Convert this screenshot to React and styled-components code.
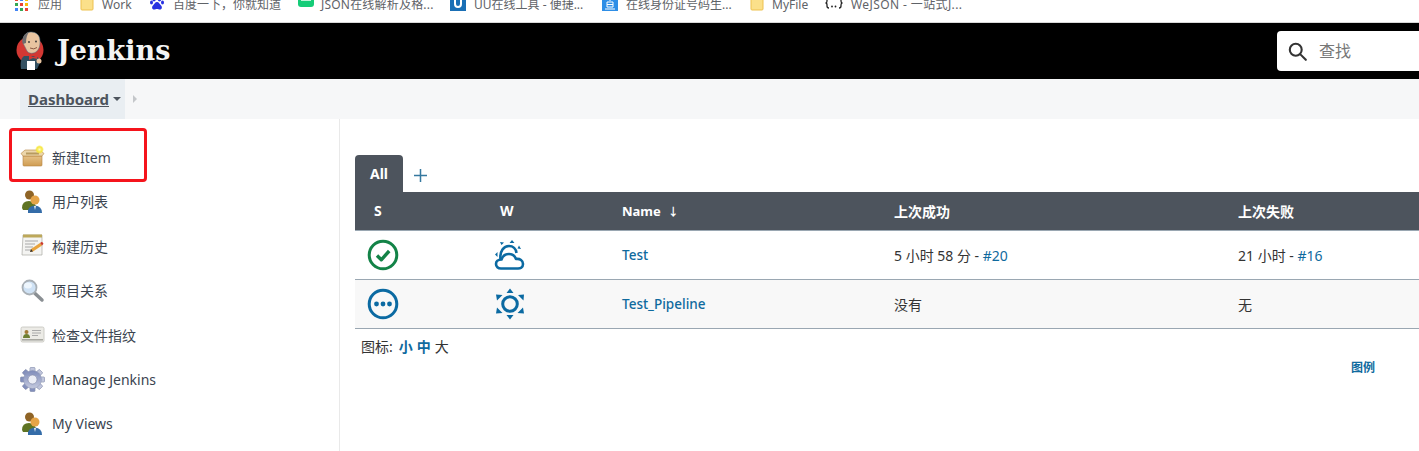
import React from 'react';
import styled, { createGlobalStyle } from 'styled-components';

const UI_FONT = `"Noto Sans", "Noto Sans CJK SC", "Liberation Sans", sans-serif`;

const GlobalStyle = createGlobalStyle`
  html, body { margin: 0; padding: 0; background: #fff; overflow: hidden; }
  body { font-family: ${UI_FONT}; color: #333; }
  * { box-sizing: border-box; }
`;

const Page = styled.div`
  width: 1419px;
  height: 451px;
  overflow: hidden;
  display: flex;
  flex-direction: column;
`;

/* browser bookmarks strip, cropped at the top */
const BookmarkBar = styled.div`
  height: 23px;
  flex: none;
  overflow: hidden;
  border-bottom: 1px solid #d8d8d8;
  background: #fff;
`;

const BookmarkRow = styled.div`
  display: flex;
  align-items: center;
  height: 20px;
  margin-top: -6px;
  padding-left: 15px;
`;

const Bookmark = styled.div`
  display: flex;
  align-items: center;
  flex: none;
  width: ${p => p.$w}px;
  gap: ${p => p.$gap || 8}px;
  font-size: 12px;
  letter-spacing: ${p => p.$track || 0}px;
  color: #5f6368;
  white-space: nowrap;
`;

const Header = styled.header`
  height: 56px;
  flex: none;
  background: #000;
  display: flex;
  align-items: center;
  justify-content: space-between;
  padding-left: 15px;
`;

const Brand = styled.div`
  display: flex;
  align-items: center;
  gap: 12px;
`;

const BrandName = styled.div`
  font-family: "DejaVu Serif", "Liberation Serif", serif;
  font-weight: 700;
  font-size: 27px;
  color: #f4f4f4;
  margin-bottom: 2px;
`;

const SearchBox = styled.div`
  width: 150px;
  height: 40px;
  margin-right: -8px;
  background: #fff;
  border-radius: 4px 0 0 4px;
  display: flex;
  align-items: center;
  gap: 11px;
  padding-left: 10px;
  color: #777;
`;

const SearchHint = styled.span`
  font-size: 16px;
  margin-bottom: 2px;
`;

const Breadcrumb = styled.nav`
  height: 40px;
  flex: none;
  background: #f6f7f8;
  padding-left: 20px;
  display: flex;
  align-items: center;
`;

const CrumbActive = styled.div`
  height: 40px;
  width: 105px;
  background: #e9eef2;
  display: flex;
  align-items: center;
  padding-left: 8px;
  gap: 4px;
`;

const CrumbLink = styled.span`
  font-size: 15px;
  font-weight: 700;
  color: #4d545d;
  text-decoration: underline;
`;

const Caret = styled.span`
  width: 0;
  height: 0;
  border-left: 4px solid transparent;
  border-right: 4px solid transparent;
  border-top: 4px solid #4d545d;
`;

const Chevron = styled.span`
  width: 0;
  height: 0;
  margin-left: 8px;
  border-top: 4px solid transparent;
  border-bottom: 4px solid transparent;
  border-left: 4px solid #c4c7ca;
`;

const Body = styled.div`
  flex: 1;
  display: flex;
  min-height: 0;
`;

const Sidebar = styled.aside`
  position: relative;
  width: 340px;
  flex: none;
  border-right: 1px solid #e9e9e9;
  padding: 15.5px 0 0 20px;
  display: flex;
  flex-direction: column;
`;

const Highlight = styled.div`
  position: absolute;
  left: 9px;
  top: 9px;
  width: 138px;
  height: 54px;
  border: 3px solid #f5141c;
  border-radius: 4px;
`;

const SideItem = styled.div`
  height: 44.5px;
  flex: none;
  display: flex;
  align-items: center;
  gap: 7px;
  font-size: 14px;
  color: #3b4450;
`;

const IconSlot = styled.span`
  width: 25px;
  height: 25px;
  flex: none;
  display: flex;
  align-items: center;
  justify-content: center;
`;

const Main = styled.main`
  flex: 1;
  min-width: 0;
  padding: 36px 0 0 15px;
  overflow: hidden;
`;

const Tabs = styled.div`
  display: flex;
  align-items: center;
  height: 37px;
`;

const Tab = styled.div`
  width: 48px;
  height: 37px;
  background: #4d545d;
  border-radius: 4px 4px 0 0;
  color: #fff;
  font-size: 14px;
  font-weight: 700;
  display: flex;
  align-items: center;
  justify-content: center;
`;

const AddTab = styled.span`
  margin-left: 11px;
  margin-top: 3px;
  display: flex;
`;

const Table = styled.table`
  width: 1064px;
  table-layout: fixed;
  border-collapse: collapse;
  font-size: 14px;
`;

const Th = styled.th`
  height: 38px;
  padding: 0 0 0 ${p => p.$pad || 0}px;
  background: #4d545d;
  color: #fff;
  text-align: left;
  font-weight: 700;
  font-size: 14px;
  border-bottom: 1px solid #9aa7b2;
`;

const SortLabel = styled.span`
  font-size: 13px;
`;

const SortArrow = styled.span`
  font-size: 11px;
  margin-left: 7px;
`;

const Tr = styled.tr`
  background: ${p => (p.$alt ? '#f8f8f8' : '#fff')};
`;

const Td = styled.td`
  height: 49px;
  padding: 0 0 0 ${p => p.$pad || 0}px;
  border-bottom: 1px solid #9aa7b2;
  color: #333;
  vertical-align: middle;
`;

const Cell = styled.span`
  display: flex;
  align-items: center;
`;

const JobLink = styled.a`
  color: #0f6a9e;
  font-weight: 500;
  font-size: 13.5px;
`;

const RunLink = styled.a`
  color: #0f6a9e;
`;

const SizeRow = styled.div`
  display: flex;
  gap: 4px;
  padding: 7px 0 0 6px;
  font-size: 14px;
  color: #333;
`;

const SizeLabel = styled.span`
  margin-right: 2px;
`;

const SizeLink = styled.a`
  color: ${p => (p.$current ? '#333' : '#0f6a9e')};
  font-weight: ${p => (p.$current ? 400 : 700)};
`;

const Legend = styled.div`
  width: 1020px;
  text-align: right;
  font-size: 12px;
  font-weight: 600;
  color: #0f6a9e;
  margin-top: 2px;
`;

const AppsIcon = () => (
  <svg width="13" height="13" viewBox="0 0 13 13">
    {[0, 5, 10].flatMap(y => [0, 5, 10].map(x => (
      <rect key={`${x}${y}`} x={x} y={y} width="3" height="3"
        fill={y === 0 ? (x === 0 ? '#ea4335' : x === 5 ? '#4285f4' : '#fbbc05') : y === 5 ? (x === 0 ? '#34a853' : x === 5 ? '#ea4335' : '#fbbc05') : (x === 0 ? '#4285f4' : x === 5 ? '#34a853' : '#ea4335')} />
    )))}
  </svg>
);

const FolderIcon = () => (
  <svg width="14" height="18" viewBox="0 0 14 18">
    <path d="M1 0h8l4 4v10q0 1-1 1H2q-1 0-1-1z" fill="#fbe08a" stroke="#edc14f" />
  </svg>
);

const BaiduIcon = () => (
  <svg width="14" height="16" viewBox="0 0 14 16" fill="#2932e1">
    <ellipse cx="4" cy="3" rx="1.8" ry="2.4" />
    <ellipse cx="9.5" cy="3" rx="1.8" ry="2.4" />
    <ellipse cx="1.5" cy="6.5" rx="1.5" ry="2" />
    <ellipse cx="12.5" cy="6.5" rx="1.5" ry="2" />
    <path d="M7 6c2 0 2.500 2 4 3.500 1.500 1.500 1 4-1 4-1.200 0-2-.5-3-.5s-1.800.5-3 .5c-2 0-2.500-2.500-1-4C4.500 8 5 6 7 6z" />
  </svg>
);

const JsonIcon = () => (
  <svg width="16" height="16" viewBox="0 0 16 16">
    <rect x="0" y="-2" width="16" height="13" rx="3" fill="#15cc78" />
    <rect x="3" y="3" width="10" height="2" fill="#bff2d9" />
  </svg>
);

const UuIcon = () => (
  <svg width="16" height="13" viewBox="0 0 16 13">
    <rect width="16" height="13" fill="#1a6fb5" />
    <path d="M5 0v6q0 3 3 3t3-3V0" fill="none" stroke="#fff" strokeWidth="2" />
  </svg>
);

const IdIcon = () => (
  <svg width="16" height="13" viewBox="0 0 16 13">
    <rect width="16" height="13" fill="#2e8ee6" />
    <path d="M4 1h8M8 0v3M5 4h6v5H5zM5 6.500h6M3 11h10" fill="none" stroke="#fff" strokeWidth="1" />
  </svg>
);

const BracesIcon = () => (
  <svg width="18" height="14" viewBox="0 0 18 14" fill="none" stroke="#222" strokeWidth="1.300">
    <path d="M4 0Q2 0 2 2v2Q2 6 .5 6 2 6 2 8v1q0 2 2 2M14 0q2 0 2 2v2q0 2 1.500 2-1.500 0-1.500 2v1q0 2-2 2" />
    <path d="M7 9.500h.01M10.500 9.500h.01" strokeWidth="1.800" strokeLinecap="round" />
  </svg>
);

const JenkinsLogo = () => (
  <svg width="30" height="40" viewBox="0 0 30 40">
    <circle cx="15" cy="19" r="13.500" fill="#d33833" />
    <path d="M6 38c-1-6 0-11 3-13l11 0c4 1 5 4 5 7l-3 6z" fill="#335061" />
    <path d="M8 12C7 5 11 1 16 1s9 3 9 9c0 3 0 7-3 10-3 3-8 3-10 0-1-2-2-4-4-8z" fill="#e8c4a0" stroke="#49728b" strokeWidth=".5" />
    <path d="M8 13C6 7 10 2 14 1c-2 3-3 6-3 11z" fill="#6d6b6d" />
    <path d="M14 24l4 2 5-2-1 4-4-1-4 2z" fill="#d33833" />
    <circle cx="14" cy="11" r=".9" fill="#333" />
    <circle cx="21" cy="10.500" r=".9" fill="#333" />
    <path d="M15 17q4 2 7-.5" fill="none" stroke="#8a5a44" strokeWidth="1" />
    <rect x="12" y="30" width="8" height="9" fill="#fff" />
    <circle cx="24" cy="30" r="2.500" fill="#e8c4a0" />
  </svg>
);

const SearchIcon = () => (
  <svg width="21" height="21" viewBox="0 0 24 24" fill="none" stroke="#333" strokeWidth="2.400">
    <circle cx="10" cy="10" r="6.800" />
    <path d="M15 15l6.500 6.500" strokeLinecap="round" />
  </svg>
);

const BoxIcon = () => (
  <svg width="25" height="25" viewBox="0 0 25 25">
    <defs>
      <linearGradient id="box" x1="0" y1="0" x2="0" y2="1">
        <stop offset="0" stopColor="#e6c288" />
        <stop offset="1" stopColor="#cf9c52" />
      </linearGradient>
      <radialGradient id="spark">
        <stop offset="0" stopColor="#fffbc0" />
        <stop offset=".6" stopColor="#f6e63c" />
        <stop offset="1" stopColor="#f6e63c" stopOpacity="0" />
      </radialGradient>
    </defs>
    <path d="M3 12h19v9q0 1-1 1H4q-1 0-1-1z" fill="url(#box)" stroke="#b58542" strokeWidth=".6" />
    <path d="M3 12L1 9.500 5 6h15l4 3.500-2 2.500z" fill="#ecd6aa" stroke="#b58542" strokeWidth=".6" />
    <path d="M6 8.500h13v2H6z" fill="#a2803f" opacity=".7" />
    <circle cx="19.500" cy="5.500" r="4.500" fill="url(#spark)" />
  </svg>
);

const UsersIcon = () => (
  <svg width="25" height="25" viewBox="0 0 25 25">
    <circle cx="9.500" cy="6" r="4.500" fill="#8f6426" />
    <path d="M2 19q0-7 7-7 6 0 7 6l-4 3H3z" fill="#5f7423" />
    <circle cx="15" cy="11" r="4.500" fill="#e5a448" />
    <path d="M8 24q-1-7 7-7.500 7 .5 7 7.500z" fill="#346ca8" />
    <path d="M14 17h2l-1 4z" fill="#e9eef2" />
  </svg>
);

const NoteIcon = () => (
  <svg width="25" height="25" viewBox="0 0 25 25">
    <path d="M3 2h19v20H2z" fill="#f4f4f2" stroke="#a9a9a3" strokeWidth=".7" />
    <path d="M3 1.500h19v3H3z" fill="#bda85a" />
    <path d="M5 8h13M5 11h10M5 14h8M5 17h8" stroke="#a8a8a8" strokeWidth="1" />
    <path d="M10 19l1-3 9-6 2 2.500-9 6z" fill="#e8a33d" />
    <path d="M20 10l2-1.200 1.500 2-1.500 1.700z" fill="#cc3b2b" />
    <path d="M10 19l1-3 2 2.500z" fill="#333" />
  </svg>
);

const MagnifierIcon = () => (
  <svg width="25" height="25" viewBox="0 0 25 25">
    <path d="M14.500 15l7.500 7" stroke="#8a8f93" strokeWidth="3.500" strokeLinecap="round" />
    <circle cx="9.500" cy="9.500" r="7" fill="#cfe2f5" stroke="#a9b0b6" strokeWidth="1.800" />
    <ellipse cx="8" cy="7.500" rx="4" ry="3" fill="#eef6fd" />
  </svg>
);

const CardIcon = () => (
  <svg width="25" height="25" viewBox="0 0 25 25">
    <rect x="1" y="5" width="23" height="15" rx="1.500" fill="#ecebe6" stroke="#c3c2bb" strokeWidth=".8" />
    <circle cx="6.500" cy="10" r="2" fill="#a17a35" />
    <path d="M3 16q0-4 3.500-4t3.500 4z" fill="#6d7f33" />
    <path d="M12 8.500h9M12 11h9M12 13.500h6" stroke="#aaa" strokeWidth="1" />
    <path d="M2 17.800h21" stroke="#a5a59e" strokeWidth="1.500" />
  </svg>
);

const GearIcon = () => (
  <svg width="25" height="25" viewBox="0 0 25 25">
    <defs>
      <linearGradient id="gear" x1="0" y1="0" x2="0" y2="1">
        <stop offset="0" stopColor="#7f8cba" />
        <stop offset="1" stopColor="#c4c9de" />
      </linearGradient>
    </defs>
    <g fill="url(#gear)" stroke="#8a92ad" strokeWidth=".4">
      {[0, 45, 90, 135, 180, 225, 270, 315].map(a => (
        <rect key={a} x="10" y="0.500" width="5" height="24" rx="1" transform={`rotate(${a} 12.500 12.500)`} />
      ))}
      <circle cx="12.500" cy="12.500" r="9" />
    </g>
    <circle cx="12.500" cy="12.500" r="4.500" fill="#eceef6" stroke="#8086a5" strokeWidth=".6" />
  </svg>
);

const StatusOk = () => (
  <svg width="32" height="32" viewBox="0 0 32 32" fill="none">
    <circle cx="16" cy="16" r="13.800" stroke="#138347" strokeWidth="3" />
    <path d="M10 16.500l4.300 4.300L22.200 12" stroke="#138347" strokeWidth="3.400" strokeLinejoin="round" />
  </svg>
);

const StatusPending = () => (
  <svg width="32" height="32" viewBox="0 0 32 32" fill="none">
    <circle cx="16" cy="16" r="13.800" stroke="#0b6aa2" strokeWidth="3" />
    <g fill="#0b6aa2">
      <circle cx="9.500" cy="16" r="2.400" />
      <circle cx="16" cy="16" r="2.400" />
      <circle cx="22.500" cy="16" r="2.400" />
    </g>
  </svg>
);

const WeatherCloudy = () => (
  <svg width="32" height="32" viewBox="0 0 32 32" fill="none">
    <g fill="#0b6aa2">
      <path d="M6 3l4 .5-2.500 2.500zM18 1l2.500 3h-5zM27 10l-3.500-.5 1.500-3zM1 15.500l2.500-2.500v5z" />
    </g>
    <path d="M6.500 20.500C5.500 12 10 7 15 7c4 0 7 3 7.500 7" stroke="#0b6aa2" strokeWidth="2.600" />
    <path d="M7 29.500c-3 0-5-2-5-4.500s2-4.500 5.500-4.500c1-3 4-5.500 7.500-5.500 4 0 6 2.500 7 5 4-.5 7 1.500 7 5s-3 4.500-5 4.500z" fill="#fff" stroke="#0b6aa2" strokeWidth="2.600" strokeLinejoin="round" />
  </svg>
);

const WeatherSunny = () => (
  <svg width="32" height="32" viewBox="0 0 32 32" fill="none">
    <circle cx="16" cy="16" r="7.300" stroke="#0b6aa2" strokeWidth="3" />
    <g fill="#0b6aa2">
      <path d="M16 .5l3.500 4.500h-7zM16 31.500l-3.500-4.500h7z" />
      <path d="M2 6.500l6.500.5L3 12.500zM30 6.500l-.5 6L24 7zM2 25.500l1-6L8.500 25zM30 25.500L23.500 25 29 19.500z" />
    </g>
  </svg>
);

const PlusIcon = () => (
  <svg width="13" height="13" viewBox="0 0 13 13" stroke="#35789f" strokeWidth="1.500">
    <path d="M6.500 0v13M0 6.500h13" />
  </svg>
);

const bookmarks = [
  { w: 65, gap: 10, icon: <AppsIcon />, label: '应用' },
  { w: 70, icon: <FolderIcon />, label: 'Work' },
  { w: 148, gap: 9, icon: <BaiduIcon />, label: '百度一下，你就知道' },
  { w: 152, gap: 7, track: 0.2, icon: <JsonIcon />, label: 'JSON在线解析及格...' },
  { w: 152, icon: <UuIcon />, label: 'UU在线工具 - 便捷...' },
  { w: 148, icon: <IdIcon />, label: '在线身份证号码生...' },
  { w: 75, icon: <FolderIcon />, label: 'MyFile' },
  { w: 170, track: 0.4, icon: <BracesIcon />, label: 'WeJSON - 一站式J...' },
];

const sideItems = [
  { icon: <BoxIcon />, label: '新建Item' },
  { icon: <UsersIcon />, label: '用户列表' },
  { icon: <NoteIcon />, label: '构建历史' },
  { icon: <MagnifierIcon />, label: '项目关系' },
  { icon: <CardIcon />, label: '检查文件指纹' },
  { icon: <GearIcon />, label: 'Manage Jenkins' },
  { icon: <UsersIcon />, label: 'My Views' },
];

const jobs = [
  { status: <StatusOk />, weather: <WeatherCloudy />, name: 'Test', ok: '5 小时 58 分 - ', okRun: '#20', fail: '21 小时 - ', failRun: '#16' },
  { status: <StatusPending />, weather: <WeatherSunny />, name: 'Test_Pipeline', ok: '没有', fail: '无', alt: true },
];

export default function App() {
  return (
    <Page>
      <GlobalStyle />
      <BookmarkBar>
        <BookmarkRow>
          {bookmarks.map(b => (
            <Bookmark key={b.label} $w={b.w} $gap={b.gap} $track={b.track}>
              {b.icon}
              <span>{b.label}</span>
            </Bookmark>
          ))}
        </BookmarkRow>
      </BookmarkBar>

      <Header>
        <Brand>
          <JenkinsLogo />
          <BrandName>Jenkins</BrandName>
        </Brand>
        <SearchBox>
          <SearchIcon />
          <SearchHint>查找</SearchHint>
        </SearchBox>
      </Header>

      <Breadcrumb>
        <CrumbActive>
          <CrumbLink>Dashboard</CrumbLink>
          <Caret />
        </CrumbActive>
        <Chevron />
      </Breadcrumb>

      <Body>
        <Sidebar>
          <Highlight />
          {sideItems.map(item => (
            <SideItem key={item.label}>
              <IconSlot>{item.icon}</IconSlot>
              <span>{item.label}</span>
            </SideItem>
          ))}
        </Sidebar>

        <Main>
          <Tabs>
            <Tab>All</Tab>
            <AddTab><PlusIcon /></AddTab>
          </Tabs>
          <Table>
            <colgroup>
              <col width="139" />
              <col width="128" />
              <col width="272" />
              <col width="344" />
              <col width="181" />
            </colgroup>
            <thead>
              <tr>
                <Th $pad={19}>S</Th>
                <Th $pad={6}>W</Th>
                <Th><SortLabel>Name</SortLabel><SortArrow>↓</SortArrow></Th>
                <Th>上次成功</Th>
                <Th>上次失败</Th>
              </tr>
            </thead>
            <tbody>
              {jobs.map(job => (
                <Tr key={job.name} $alt={job.alt}>
                  <Td $pad={12}><Cell>{job.status}</Cell></Td>
                  <Td><Cell>{job.weather}</Cell></Td>
                  <Td><JobLink>{job.name}</JobLink></Td>
                  <Td>{job.ok}{job.okRun && <RunLink>{job.okRun}</RunLink>}</Td>
                  <Td>{job.fail}{job.failRun && <RunLink>{job.failRun}</RunLink>}</Td>
                </Tr>
              ))}
            </tbody>
          </Table>
          <SizeRow>
            <SizeLabel>图标:</SizeLabel>
            <SizeLink>小</SizeLink>
            <SizeLink>中</SizeLink>
            <SizeLink $current>大</SizeLink>
          </SizeRow>
          <Legend>图例</Legend>
        </Main>
      </Body>
    </Page>
  );
}
